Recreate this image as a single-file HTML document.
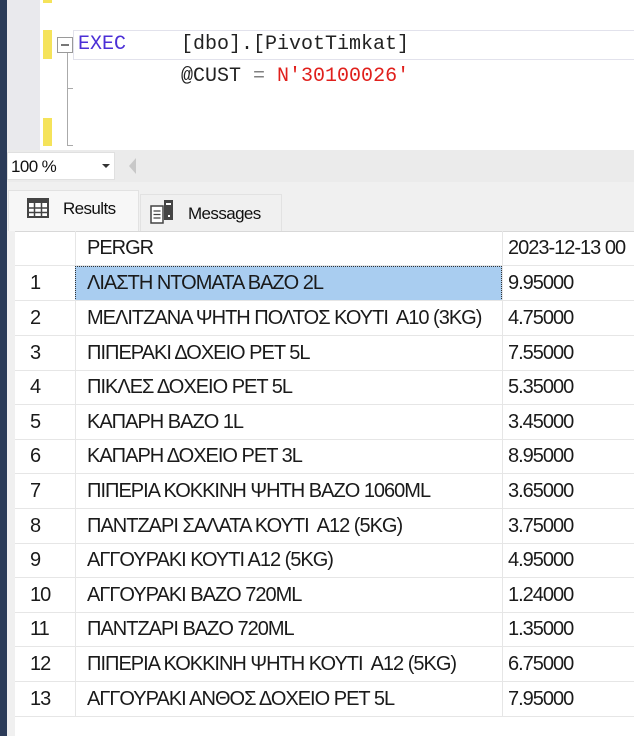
<!DOCTYPE html>
<html><head><meta charset="utf-8"><style>
*{margin:0;padding:0;box-sizing:border-box}
body{width:634px;height:736px;overflow:hidden;background:#fff;position:relative;font-family:"Liberation Sans",sans-serif}
.a{position:absolute}
.mono{font-family:"Liberation Mono",monospace;font-size:20px;white-space:pre;line-height:20px}
.row{position:absolute;left:15px;right:0;height:35px;border-bottom:1px solid #e6e6e6;font-size:20px;letter-spacing:-1px;color:#1a1a1a}
.row span{position:absolute;top:6px;white-space:pre}
.c1{left:15px}.c2{left:72px}.c3{left:493px}
.vl{position:absolute;top:231px;bottom:20px;width:1px;background:#e6e6e6}
</style></head><body>
<div class="a" style="left:0;top:0;width:7px;height:736px;background:#2b3b58"></div>
<div class="a" style="left:7px;top:0;width:33px;height:150px;background:#e9e9ed"></div>
<div class="a" style="left:43px;top:0;width:9px;height:3px;background:#f5e35a"></div>
<div class="a" style="left:43px;top:30px;width:9px;height:29px;background:#f5e35a"></div>
<div class="a" style="left:43px;top:118px;width:9px;height:28px;background:#f5e35a"></div>
<div class="a" style="left:73px;top:30px;width:561px;height:30px;border:1px solid #e2e2ec;border-right:none"></div>
<div class="a" style="left:57px;top:37px;width:16px;height:16px;border:1px solid #9a9a9a;background:#fff"></div>
<div class="a" style="left:61px;top:44px;width:8px;height:2px;background:#777"></div>
<div class="a" style="left:67px;top:53px;width:1px;height:93px;background:#aaa"></div>
<div class="a" style="left:67px;top:88px;width:6px;height:1px;background:#aaa"></div>
<div class="a" style="left:67px;top:145px;width:6px;height:1px;background:#aaa"></div>
<div class="a mono" style="left:78px;top:35px;color:#4b2fd6">EXEC</div>
<div class="a mono" style="left:181px;top:35px;color:#222">[dbo].[PivotTimkat]</div>
<div class="a mono" style="left:181px;top:67px;color:#222">@CUST <span style="color:#808080">=</span> <span style="color:#e0201c">N'30100026'</span></div>
<div class="a" style="left:7px;top:150px;width:627px;height:32px;background:#ebebeb"></div>
<div class="a" style="left:7px;top:152px;width:108px;height:28px;background:#fff;border:1px solid #e0e0e0"></div>
<div class="a" style="left:11px;top:157px;font-size:17px;letter-spacing:-0.6px;color:#111">100 %</div>
<div class="a" style="left:102px;top:164px;border-left:4px solid transparent;border-right:4px solid transparent;border-top:4px solid #333"></div>
<div class="a" style="left:129px;top:158px;border-top:8px solid transparent;border-bottom:8px solid transparent;border-right:7px solid #c8c8c8"></div>
<div class="a" style="left:7px;top:182px;width:627px;height:49px;background:#f0f0f0"></div>
<div class="a" style="left:8px;top:190px;width:131px;height:41px;background:#f7f7f7;border:1px solid #e2e2e2;border-bottom:none"></div>
<div class="a" style="left:140px;top:194px;width:142px;height:37px;background:#f0f0f0;border:1px solid #e2e2e2;border-bottom:none"></div>
<svg class="a" style="left:27px;top:198px" width="22" height="20" viewBox="0 0 22 20"><rect x="1" y="1" width="20" height="18" fill="#fff" stroke="#444" stroke-width="2"/><rect x="1" y="1" width="20" height="4" fill="#444"/><path d="M1 10H21M1 14.5H21M7.5 5V19M14.5 5V19" stroke="#444" stroke-width="1.5"/></svg>
<div class="a" style="left:63px;top:199px;font-size:17px;letter-spacing:-0.6px;color:#111">Results</div>
<svg class="a" style="left:150px;top:199px" width="26" height="26" viewBox="0 0 26 26"><rect x="1" y="7" width="12" height="17" fill="#fff" stroke="#444" stroke-width="1.5"/><path d="M3.5 12H10.5M3.5 15.5H10.5M3.5 19H10.5" stroke="#444" stroke-width="1.3"/><rect x="14" y="1" width="9" height="20" fill="#444"/><rect x="16" y="4" width="5" height="2" fill="#fff"/><rect x="18" y="16" width="2" height="2" fill="#fff"/></svg>
<div class="a" style="left:188px;top:204px;font-size:17px;letter-spacing:-0.6px;color:#111">Messages</div>
<div class="a" style="left:7px;top:231px;width:8px;height:505px;background:#f0f0f0"></div>
<div class="a" style="left:15px;top:231px;width:619px;height:1px;background:#d8d8d8"></div>
<div class="vl" style="left:75px;bottom:20px;height:486px"></div>
<div class="vl" style="left:502px;height:486px"></div>
<div class="row" style="top:231px;height:35px"><span class="c2">PERGR</span><span class="c3">2023-12-13 00</span></div>
<div class="a" style="left:75px;top:266px;width:427px;height:35px;background:#a9cdf0;border:1px dotted #333"></div>
<div class="row" style="top:266px"><span class="c1">1</span><span class="c2">ΛΙΑΣΤΗ ΝΤΟΜΑΤΑ ΒΑΖΟ 2L</span><span class="c3">9.95000</span></div>
<div class="row" style="top:301px"><span class="c1">2</span><span class="c2">ΜΕΛΙΤΖΑΝΑ ΨΗΤΗ ΠΟΛΤΟΣ ΚΟΥΤΙ  Α10 (3KG)</span><span class="c3">4.75000</span></div>
<div class="row" style="top:336px"><span class="c1">3</span><span class="c2">ΠΙΠΕΡΑΚΙ ΔΟΧΕΙΟ PET 5L</span><span class="c3">7.55000</span></div>
<div class="row" style="top:370px"><span class="c1">4</span><span class="c2">ΠΙΚΛΕΣ ΔΟΧΕΙΟ PET 5L</span><span class="c3">5.35000</span></div>
<div class="row" style="top:405px"><span class="c1">5</span><span class="c2">ΚΑΠΑΡΗ ΒΑΖΟ 1L</span><span class="c3">3.45000</span></div>
<div class="row" style="top:439px"><span class="c1">6</span><span class="c2">ΚΑΠΑΡΗ ΔΟΧΕΙΟ PET 3L</span><span class="c3">8.95000</span></div>
<div class="row" style="top:474px"><span class="c1">7</span><span class="c2">ΠΙΠΕΡΙΑ ΚΟΚΚΙΝΗ ΨΗΤΗ ΒΑΖΟ 1060ML</span><span class="c3">3.65000</span></div>
<div class="row" style="top:509px"><span class="c1">8</span><span class="c2">ΠΑΝΤΖΑΡΙ ΣΑΛΑΤΑ ΚΟΥΤΙ  Α12 (5KG)</span><span class="c3">3.75000</span></div>
<div class="row" style="top:543px"><span class="c1">9</span><span class="c2">ΑΓΓΟΥΡΑΚΙ ΚΟΥΤΙ Α12 (5KG)</span><span class="c3">4.95000</span></div>
<div class="row" style="top:578px"><span class="c1">10</span><span class="c2">ΑΓΓΟΥΡΑΚΙ ΒΑΖΟ 720ML</span><span class="c3">1.24000</span></div>
<div class="row" style="top:612px"><span class="c1">11</span><span class="c2">ΠΑΝΤΖΑΡΙ ΒΑΖΟ 720ML</span><span class="c3">1.35000</span></div>
<div class="row" style="top:647px"><span class="c1">12</span><span class="c2">ΠΙΠΕΡΙΑ ΚΟΚΚΙΝΗ ΨΗΤΗ ΚΟΥΤΙ  Α12 (5KG)</span><span class="c3">6.75000</span></div>
<div class="row" style="top:682px"><span class="c1">13</span><span class="c2">ΑΓΓΟΥΡΑΚΙ ΑΝΘΟΣ ΔΟΧΕΙΟ PET 5L</span><span class="c3">7.95000</span></div>
</body></html>
